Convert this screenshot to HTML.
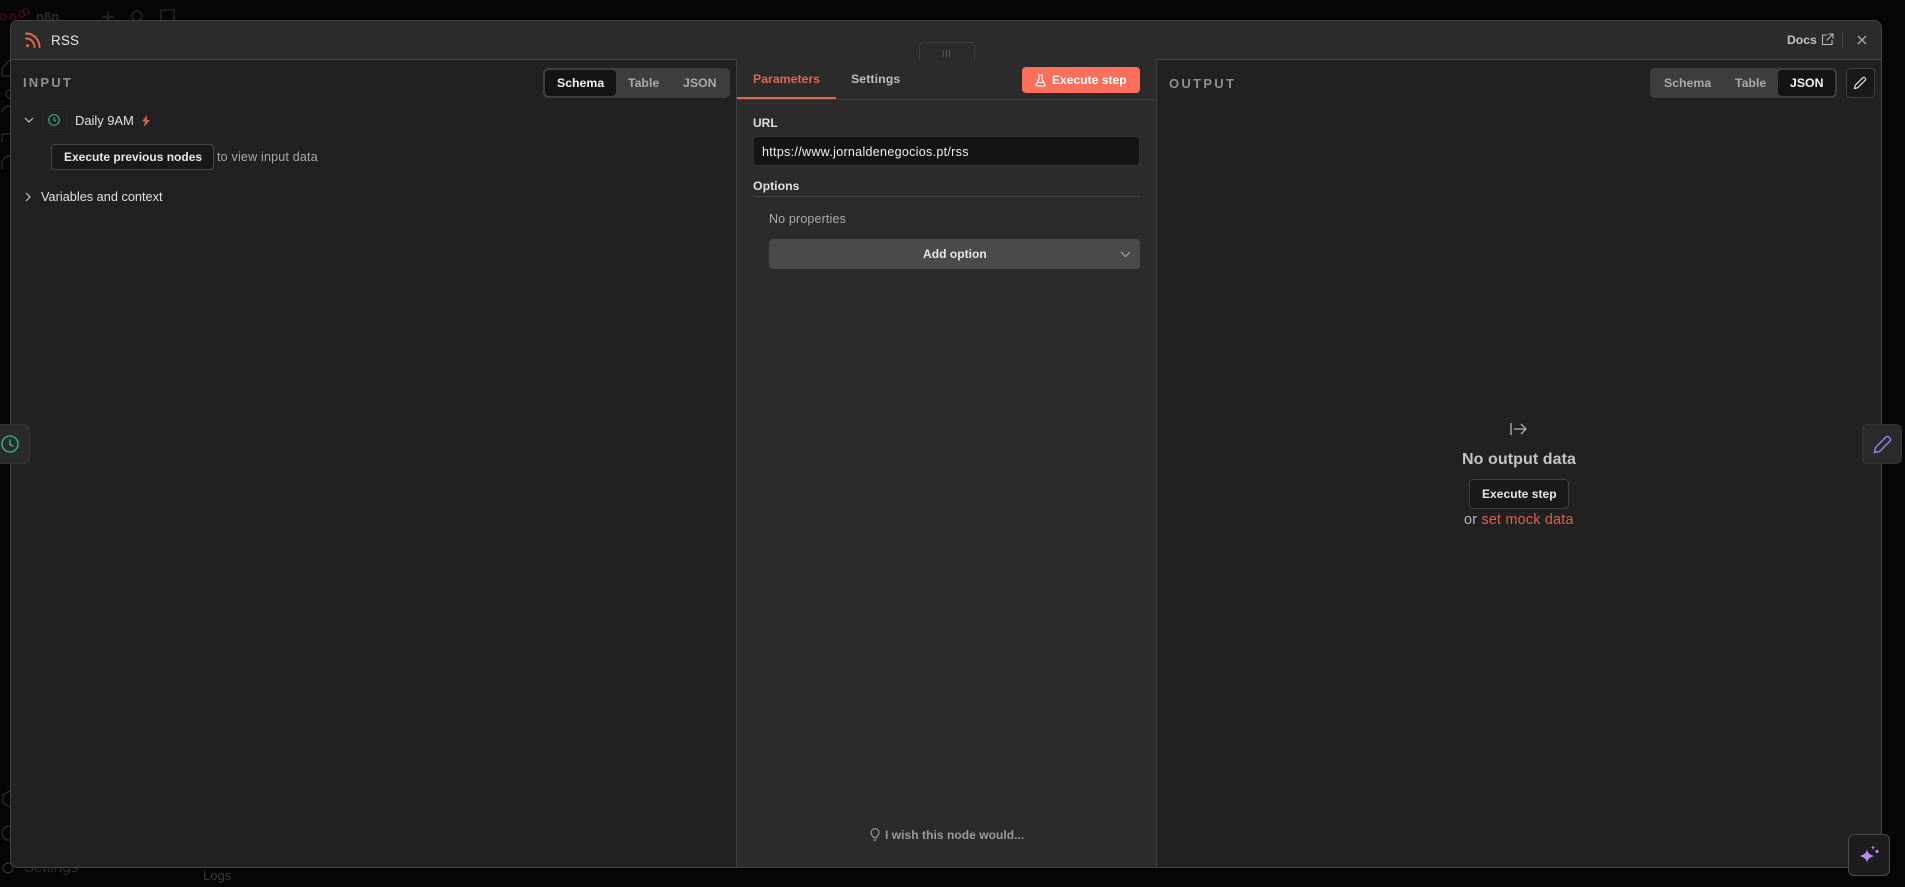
<!DOCTYPE html>
<html><head><meta charset="utf-8"><title>RSS</title>
<style>
*{box-sizing:border-box}
html,body{margin:0;padding:0;width:1905px;height:887px;overflow:hidden;background:#050505;font-family:"Liberation Sans",sans-serif;}
.a{position:absolute;white-space:nowrap}
.t{position:absolute;white-space:nowrap;line-height:16px;height:16px}
svg{position:absolute;overflow:visible}
.tabs{position:absolute;top:68px;width:187px;height:30px;background:#3d3d3d;border-radius:5px;}
.seg{position:absolute;top:2px;height:26px;background:#141414;border-radius:4px}
</style></head><body>

<!-- dim background -->
<svg style="left:0;top:0" width="120" height="20" fill="none" stroke="#3a0f1c" stroke-width="1.5"><circle cx="3" cy="17" r="3"/><circle cx="13" cy="17" r="3"/><circle cx="22" cy="14" r="3"/><circle cx="26" cy="12" r="3"/></svg>
<div class="t" style="left:36px;top:9px;font-size:13px;color:#2a2a2a;font-weight:bold">n8n</div>
<svg style="left:101px;top:10px" width="70" height="16" fill="none" stroke="#262626" stroke-width="1.4"><path d="M1 7h12M7 1v12"/><circle cx="36" cy="6" r="5"/><rect x="60" y="0" width="13" height="12"/></svg>
<svg style="left:0;top:50px" width="10" height="120" fill="none" stroke="#2a2a2a" stroke-width="1.4"><path d="M2 18l8-8M2 18v8h8"/><circle cx="10" cy="44" r="4"/><path d="M2 62a8 8 0 0 1 8-6M2 92v-8h8M2 120v-8a8 8 0 0 1 8-6"/></svg>
<svg style="left:0;top:790px" width="16" height="80" fill="none" stroke="#2a2a2a" stroke-width="1.4"><path d="M3 5l7-4 4 3v10l-4 3-7-4z"/><circle cx="9" cy="43" r="7"/><circle cx="8" cy="78" r="5"/></svg>
<div class="t" style="left:24px;top:860px;font-size:15px;color:#2c2c2c">Settings</div>
<div class="t" style="left:203px;top:868px;font-size:13px;color:#3a3a3a">Logs</div>

<!-- modal -->
<div class="a" style="left:10px;top:20px;width:1872px;height:848px;background:#212121;border:1px solid #444;border-radius:8px;overflow:hidden">
  <div class="a" style="left:0;top:0;width:1870px;height:39px;background:#2b2b2b;border-bottom:1px solid #454545"></div>
  <div class="a" style="left:725px;top:38px;width:421px;height:809px;background:#2b2b2b;border-left:1px solid #404040;border-right:1px solid #404040"></div>
</div>

<!-- header -->
<svg style="left:25px;top:32px" width="16" height="16" viewBox="0 0 16 16" fill="none" stroke="#e0684f" stroke-width="1.9" stroke-linecap="round"><path d="M1 1.500c7.500 0 13.500 6 13.500 13.500"/><path d="M1 6.500c4.800 0 8.500 3.700 8.500 8.500"/><circle cx="2.600" cy="13.600" r="1.500" fill="#e0684f" stroke="none"/></svg>
<div class="t" style="left:51px;top:33px;font-size:13.5px;color:#e8e8e8;letter-spacing:.1px">RSS</div>
<div class="t" style="left:1787px;top:32px;font-size:12.2px;color:#c4c4c4;font-weight:bold">Docs</div>
<svg style="left:1821px;top:33px" width="13" height="13" viewBox="0 0 13 13" fill="none" stroke="#bdbdbd" stroke-width="1.100"><path d="M6 2H1.500v9.500H11V7M7.500 1H12v4.500M12 1L5.500 7.500"/></svg>
<div class="a" style="left:1842px;top:32px;width:1px;height:16px;background:#444"></div>
<svg style="left:1857px;top:35px" width="10" height="10" fill="none" stroke="#bdbdbd" stroke-width="1.200"><path d="M1 1l8 8M9 1l-8 8"/></svg>

<!-- input panel -->
<div class="t" style="left:23px;top:75px;font-size:13px;font-weight:bold;letter-spacing:2.200px;color:#8f8f8f">INPUT</div>
<div class="tabs" style="left:543px"><div class="seg" style="left:2px;width:71px"></div></div>
<div class="t" style="left:557px;top:75px;font-size:12.300px;font-weight:bold;color:#f2f2f2">Schema</div>
<div class="t" style="left:628px;top:75px;font-size:12.300px;font-weight:bold;color:#aaa">Table</div>
<div class="t" style="left:683px;top:75px;font-size:12.300px;font-weight:bold;color:#aaa">JSON</div>

<svg style="left:24px;top:117px" width="10" height="7" fill="none" stroke="#c8c8c8" stroke-width="1.200"><path d="M1 1l4 4 4-4"/></svg>
<div class="a" style="left:42px;top:108px;width:25px;height:25px;border:1px solid #262626;border-radius:3px"></div>
<svg style="left:48px;top:114px" width="12" height="12" viewBox="0 0 12 12" fill="none" stroke="#35a583" stroke-width="1.200"><circle cx="6" cy="6" r="5.300"/><path d="M6 3v3.200l2 1"/></svg>
<div class="t" style="left:75px;top:113px;font-size:13px;color:#e4e4e4;font-weight:500;letter-spacing:-.05px">Daily 9AM</div>
<svg style="left:141px;top:115px" width="10" height="12" viewBox="0 0 10 12" fill="#d9614b"><path d="M6 0L1 6.500h3L3 12l6-7H5.800z"/></svg>

<div class="a" style="left:51px;top:144px;width:163px;height:26px;background:#191919;border:1px solid #444;border-radius:4px"></div>
<div class="t" style="left:64px;top:149px;font-size:12px;font-weight:bold;color:#e8e8e8">Execute previous nodes</div>
<div class="t" style="left:217px;top:149px;font-size:12.500px;color:#a8a8a8;letter-spacing:.2px">to view input data</div>
<svg style="left:25px;top:192px" width="6" height="10" fill="none" stroke="#c8c8c8" stroke-width="1.200"><path d="M1 1l4 4-4 4"/></svg>
<div class="t" style="left:41px;top:189px;font-size:12.700px;color:#e0e0e0;font-weight:500;letter-spacing:.02px">Variables and context</div>

<!-- handle -->
<div class="a" style="left:919px;top:42px;width:56px;height:18px;background:#2b2b2b;border:1px solid #3c3c3c;border-bottom:none;border-radius:4px 4px 0 0"></div>
<div class="a" style="left:943px;top:50px;width:1px;height:7px;background:#555"></div>
<div class="a" style="left:946px;top:50px;width:1px;height:7px;background:#555"></div>
<div class="a" style="left:949px;top:50px;width:1px;height:7px;background:#555"></div>

<!-- params -->
<div class="a" style="left:736px;top:99px;width:420px;height:1px;background:#3f3f3f"></div>
<div class="a" style="left:737px;top:97px;width:99px;height:2px;background:#e0684f"></div>
<div class="t" style="left:753px;top:71px;font-size:12.300px;font-weight:bold;color:#e0684f">Parameters</div>
<div class="t" style="left:851px;top:71px;font-size:12.300px;font-weight:bold;color:#bdbdbd;letter-spacing:.1px">Settings</div>
<div class="a" style="left:1022px;top:67px;width:118px;height:26px;background:#fd6f5b;border-radius:4px"></div>
<svg style="left:1035px;top:74px" width="11" height="13" viewBox="0 0 11 13" fill="none" stroke="#fff" stroke-width="1.100"><path d="M3 1h5M4 1v4L1 11.200c-.2.500.1.800.6.800h7.800c.5 0 .8-.3.6-.8L7 5V1M2.500 8.500h6"/></svg>
<div class="t" style="left:1052px;top:72px;font-size:12px;font-weight:bold;color:#fff;letter-spacing:.05px">Execute step</div>
<div class="t" style="left:753px;top:115px;font-size:12px;font-weight:bold;color:#e0e0e0">URL</div>
<div class="a" style="left:753px;top:136px;width:387px;height:30px;background:#141414;border:1px solid #333;border-radius:4px"></div>
<div class="t" style="left:762px;top:144px;font-size:12.500px;color:#eee;letter-spacing:.31px">https://www.jornaldenegocios.pt/rss</div>
<div class="t" style="left:753px;top:178px;font-size:12.300px;font-weight:bold;color:#e0e0e0">Options</div>
<div class="a" style="left:753px;top:196px;width:387px;height:1px;background:#454545"></div>
<div class="t" style="left:769px;top:211px;font-size:12.500px;color:#aaa;letter-spacing:.15px">No properties</div>
<div class="a" style="left:769px;top:239px;width:371px;height:30px;background:#4a4a4a;border-radius:4px"></div>
<div class="t" style="left:923px;top:246px;font-size:12px;font-weight:bold;color:#e8e8e8;letter-spacing:.05px">Add option</div>
<svg style="left:1120px;top:251px" width="11" height="7" fill="none" stroke="#aaa" stroke-width="1.100"><path d="M1 1l4.500 4.500L10 1"/></svg>
<svg style="left:870px;top:828px" width="10" height="14" viewBox="0 0 10 14" fill="none" stroke="#999" stroke-width="1.200"><path d="M3.500 9.500C3.200 8 1 7.200 1 4.700a4 4 0 0 1 8 0c0 2.500-2.200 3.300-2.500 4.800zM3.500 12h3"/></svg>
<div class="t" style="left:885px;top:827px;font-size:12px;font-weight:bold;color:#9a9a9a;letter-spacing:.05px">I wish this node would...</div>

<!-- output -->
<div class="t" style="left:1169px;top:76px;font-size:13px;font-weight:bold;letter-spacing:2.300px;color:#8f8f8f">OUTPUT</div>
<div class="tabs" style="left:1650px"><div class="seg" style="left:128px;width:57px"></div></div>
<div class="t" style="left:1664px;top:75px;font-size:12.300px;font-weight:bold;color:#aaa">Schema</div>
<div class="t" style="left:1735px;top:75px;font-size:12.300px;font-weight:bold;color:#aaa">Table</div>
<div class="t" style="left:1790px;top:75px;font-size:12.300px;font-weight:bold;color:#f2f2f2">JSON</div>
<div class="a" style="left:1846px;top:68px;width:29px;height:30px;background:#191919;border:1px solid #3f3f3f;border-radius:4px"></div>
<svg style="left:1853px;top:76px" width="14" height="14" viewBox="0 0 14 14" fill="none" stroke="#e0e0e0" stroke-width="1.200"><path d="M1.500 12.500l.8-3.300L9.700 1.800a1.500 1.500 0 0 1 2.200 0l.3.300a1.500 1.500 0 0 1 0 2.200L4.800 11.700z"/></svg>

<svg style="left:1510px;top:422px" width="17" height="14" viewBox="0 0 17 14" fill="none" stroke="#b5b5b5" stroke-width="1.300"><path d="M1 1v12M4 7h12M11 2l5 5-5 5"/></svg>
<div class="t" style="left:1462px;top:452px;font-size:16px;font-weight:bold;color:#c4c4c4;letter-spacing:.08px">No output data</div>
<div class="a" style="left:1469px;top:479px;width:100px;height:30px;background:#191919;border:1px solid #3f3f3f;border-radius:4px"></div>
<div class="t" style="left:1482px;top:486px;font-size:12px;font-weight:bold;color:#e8e8e8;letter-spacing:.05px">Execute step</div>
<div class="t" style="left:1464px;top:512px;font-size:14.300px;color:#b8b8b8;letter-spacing:.25px">or <span style="color:#e0614d">set mock data</span></div>

<!-- floating -->
<div class="a" style="left:-12px;top:424px;width:42px;height:40px;background:#2a2a2a;border:1px solid #333;border-radius:6px"></div>
<svg style="left:1px;top:435px" width="18" height="18" viewBox="0 0 18 18" fill="none" stroke="#35a583" stroke-width="1.600"><circle cx="9" cy="9" r="8"/><path d="M9 4.500v5l3.200 1.800"/></svg>
<div class="a" style="left:1862px;top:424px;width:40px;height:40px;background:#2a2a2a;border:1px solid #333;border-radius:6px"></div>
<svg style="left:1873px;top:435px" width="19" height="19" viewBox="0 0 19 19" fill="none" stroke="#8b7fe0" stroke-width="1.500"><path d="M1.500 17.500l1-5L12.800 2.200a2.200 2.200 0 0 1 3.200 0l.8.800a2.200 2.200 0 0 1 0 3.200L6.500 16.500z"/></svg>
<div class="a" style="left:1848px;top:834px;width:42px;height:42px;background:#1c1c1c;border:1px solid #4a4a4a;border-radius:6px"></div>
<svg style="left:1859px;top:845px" width="21" height="20" viewBox="0 0 21 20" fill="#b78cf0"><path d="M8 4c.6 4 2.400 5.500 7 7-4.600 1.500-6.400 3-7 7-.6-4-2.400-5.500-7-7 4.600-1.500 6.400-3 7-7z"/><path d="M14 0c.2 1.800.6 2.300 2.300 2.600C14.600 2.900 14.200 3.400 14 5.200c-.2-1.800-.6-2.300-2.300-2.600C13.400 2.300 13.800 1.800 14 0z"/><circle cx="18" cy="6.500" r="1.600"/></svg>
</body></html>
